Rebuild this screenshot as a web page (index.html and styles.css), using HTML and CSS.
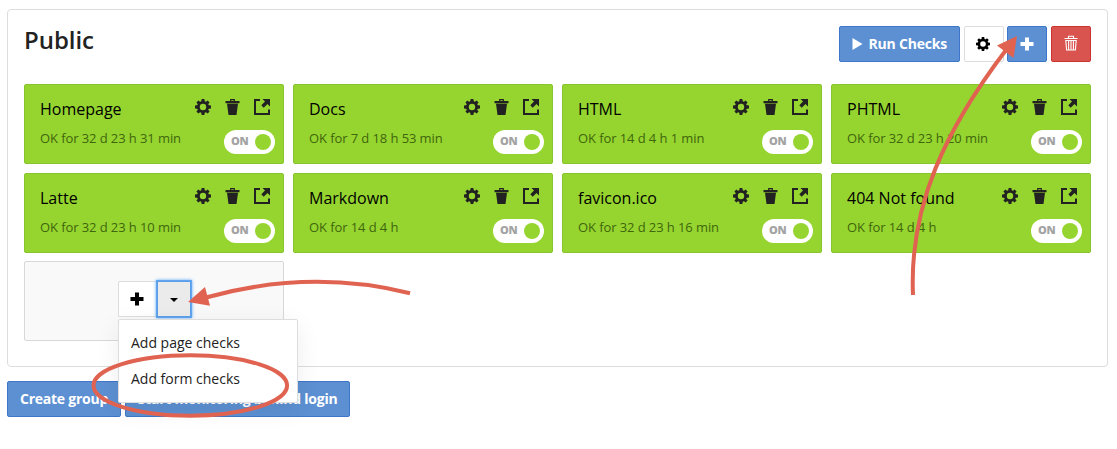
FILE: index.html
```html
<!DOCTYPE html>
<html lang="en">
<head>
<meta charset="utf-8">
<title>Public checks</title>
<link rel="stylesheet" href="styles.css">
</head>
<body>
<svg class="defs" aria-hidden="true">
  <symbol id="gear" viewBox="0 0 16 16">
    <circle cx="8" cy="8" r="4.600" fill="none" stroke="currentColor" stroke-width="2.800"/>
    <path d="M6.6 0h2.8l.5 3.5H6.1zM6.6 16h2.8l.5-3.5H6.1zM0 6.6v2.8l3.5.5V6.1zM16 6.6v2.8l-3.5.5V6.1zM1.4 3.4l2-2L6 3.5 3.5 6zM14.6 3.4l-2-2L10 3.5 12.5 6zM1.4 12.6l2 2L6 12.5 3.5 10zM14.6 12.6l-2 2L10 12.5l2.500-2.500z" fill="currentColor"/>
  </symbol>
  <symbol id="trash" viewBox="0 0 15 16">
    <path d="M.5 2h14v2.200H.5zM2 4.800h11L11.500 16h-8z" fill="currentColor"/>
    <path d="M5.700 2.500V.6h3.600v1.900" fill="none" stroke="currentColor" stroke-width="1.200"/>
  </symbol>
  <symbol id="external" viewBox="0 0 16 16">
    <path d="M6 1H1v14h14v-4.500" fill="none" stroke="currentColor" stroke-width="2"/>
    <path d="M8.500 0H16v7.500l-2.500-2.400-3.800 3.600-2.400-2.400 3.700-3.800z" fill="currentColor"/>
  </symbol>
  <symbol id="plus" viewBox="0 0 14 14">
    <path d="M5 .5h4V5h4.500v4H9v4.500H5V9H.5V5H5z" fill="currentColor"/>
  </symbol>
  <symbol id="bin" viewBox="0 0 14 16">
    <path d="M4.500 3V1.200h5V3M.5 3.500h13M1.800 5.500h10.400l-.8 9.500H2.600zM4.600 6v8.500M7 6v8.500M9.400 6v8.500" fill="none" stroke="currentColor" stroke-width="1.100"/>
  </symbol>
</svg>

<section class="panel">
  <header class="panel-head">
    <h1 class="title">Public</h1>
    <div class="actions">
      <button class="btn primary run"><svg class="play" viewBox="0 0 10 12"><path d="M0 0l10 6-10 6z" fill="currentColor"/></svg>Run Checks</button>
      <button class="btn square"><svg class="i14"><use href="#gear"/></svg></button>
      <button class="btn primary square"><svg class="i14"><use href="#plus"/></svg></button>
      <button class="btn danger square"><svg class="bin"><use href="#bin"/></svg></button>
    </div>
  </header>
  <div class="grid">
    <article class="card"><div class="info"><h2>Homepage</h2><p>OK for 32 d 23 h 31 min</p></div><div class="tools"><div class="icons"><svg class="i16"><use href="#gear"/></svg><svg class="trash"><use href="#trash"/></svg><svg class="i16"><use href="#external"/></svg></div><span class="toggle">ON<i class="knob"></i></span></div></article>
    <article class="card"><div class="info"><h2>Docs</h2><p>OK for 7 d 18 h 53 min</p></div><div class="tools"><div class="icons"><svg class="i16"><use href="#gear"/></svg><svg class="trash"><use href="#trash"/></svg><svg class="i16"><use href="#external"/></svg></div><span class="toggle">ON<i class="knob"></i></span></div></article>
    <article class="card"><div class="info"><h2>HTML</h2><p>OK for 14 d 4 h 1 min</p></div><div class="tools"><div class="icons"><svg class="i16"><use href="#gear"/></svg><svg class="trash"><use href="#trash"/></svg><svg class="i16"><use href="#external"/></svg></div><span class="toggle">ON<i class="knob"></i></span></div></article>
    <article class="card"><div class="info"><h2>PHTML</h2><p>OK for 32 d 23 h 20 min</p></div><div class="tools"><div class="icons"><svg class="i16"><use href="#gear"/></svg><svg class="trash"><use href="#trash"/></svg><svg class="i16"><use href="#external"/></svg></div><span class="toggle">ON<i class="knob"></i></span></div></article>
    <article class="card"><div class="info"><h2>Latte</h2><p>OK for 32 d 23 h 10 min</p></div><div class="tools"><div class="icons"><svg class="i16"><use href="#gear"/></svg><svg class="trash"><use href="#trash"/></svg><svg class="i16"><use href="#external"/></svg></div><span class="toggle">ON<i class="knob"></i></span></div></article>
    <article class="card"><div class="info"><h2>Markdown</h2><p>OK for 14 d 4 h</p></div><div class="tools"><div class="icons"><svg class="i16"><use href="#gear"/></svg><svg class="trash"><use href="#trash"/></svg><svg class="i16"><use href="#external"/></svg></div><span class="toggle">ON<i class="knob"></i></span></div></article>
    <article class="card"><div class="info"><h2>favicon.ico</h2><p>OK for 32 d 23 h 16 min</p></div><div class="tools"><div class="icons"><svg class="i16"><use href="#gear"/></svg><svg class="trash"><use href="#trash"/></svg><svg class="i16"><use href="#external"/></svg></div><span class="toggle">ON<i class="knob"></i></span></div></article>
    <article class="card"><div class="info"><h2>404 Not found</h2><p>OK for 14 d 4 h</p></div><div class="tools"><div class="icons"><svg class="i16"><use href="#gear"/></svg><svg class="trash"><use href="#trash"/></svg><svg class="i16"><use href="#external"/></svg></div><span class="toggle">ON<i class="knob"></i></span></div></article>
    <div class="card empty">
      <div class="split">
        <button class="btn add"><svg class="i14"><use href="#plus"/></svg></button>
        <button class="btn caret"><svg class="chev" viewBox="0 0 8 4"><path d="M0 0h8L4 4z" fill="currentColor"/></svg></button>
        <div class="menu">
          <a class="item">Add page checks</a>
          <a class="item">Add form checks</a>
        </div>
      </div>
    </div>
  </div>
</section>
<footer class="foot">
  <button class="btn primary create">Create group</button>
  <button class="btn primary monitor">Start monitoring behind login</button>
</footer>

<svg class="notes" viewBox="0 0 1117 449">
  <g fill="none" stroke="#e06352" stroke-width="4">
    <path d="M410 293.300Q310 268.500 206 297.500"/>
    <path d="M913 295C909 205 946 129 1006 50"/>
    <ellipse cx="190.300" cy="385.500" rx="96.800" ry="30.200"/>
  </g>
  <path d="M188 302L205 287l5 18.700zM1017 36l-20 9.500L1013.500 58z" fill="#e06352"/>
</svg>
</body>
</html>
```
FILE: styles.css
```css
* { box-sizing: border-box; }
body {
  margin: 0;
  padding: 9px 9px 0 7px;
  height: 449px;
  overflow: hidden;
  position: relative;
  background: #fff;
  color: #222;
  font-family: "Open Sans", sans-serif;
  font-size: 14px;
}
.defs { position: absolute; width: 0; height: 0; }
svg { display: block; flex: none; }
.panel {
  height: 358px;
  padding: 16px;
  border: 1px solid #ddd;
  border-radius: 4px;
}
.panel-head { display: flex; justify-content: space-between; height: 58px; }
.title { margin: -3px 0 0; font-size: 24px; line-height: 33px; font-weight: 600; letter-spacing: -0.05px; }
.actions { display: flex; gap: 3.600px; }
.btn {
  display: flex;
  align-items: center;
  justify-content: center;
  height: 36px;
  padding: 0 12px 2px;
  border: 1px solid #ddd;
  border-radius: 2px;
  background: #fff;
  color: #000;
  font: 700 14px "Open Sans", sans-serif;
  letter-spacing: -0.25px;
  white-space: nowrap;
}
.primary { background: #5c90d2; border-color: #3e77c9; color: #fff; }
.danger { background: #d9534f; border-color: #cb3430; color: #fff; }
.square { width: 40px; padding: 0 1px 1px 0; }
.danger.square { padding: 0 0 2px; }
.run { width: 121px; letter-spacing: -0.2px; }
.create { width: 114px; }
.monitor { width: 225px; }
.play { width: 11px; height: 12px; margin: 1px 5px 0 0; }
.i14 { width: 14px; height: 14px; }
.i16 { width: 16px; height: 16px; }
.trash { width: 15px; height: 16px; }
.bin { width: 14px; height: 16px; }
.grid {
  display: grid;
  grid-template-columns: repeat(4, 260px);
  grid-auto-rows: 80px;
  gap: 8.600px 9px;
}
.card {
  display: flex;
  justify-content: space-between;
  padding: 14px 8px 0 15px;
  border: 1px solid #88c42e;
  border-radius: 2px;
  background: #96d530;
}
.card h2 { margin: -1px 0 0; font-size: 16px; line-height: 22px; font-weight: 400; color: #000; }
.card p { margin: 9px 0 0; font-size: 13px; line-height: 18px; letter-spacing: -0.09px; color: #3f660c; white-space: nowrap; }
.tools { display: flex; flex-direction: column; align-items: flex-end; gap: 15px; }
.icons { display: flex; gap: 14px; padding-right: 5px; }
.toggle {
  display: flex;
  align-items: center;
  justify-content: space-between;
  width: 51px;
  height: 24px;
  padding: 0 4px 0 7px;
  border-radius: 12px;
  background: #fff;
  color: #a3a3a3;
  font-size: 11px;
  line-height: 22px;
  align-items: flex-start;
  font-weight: 800;
  letter-spacing: -0.3px;
}
.knob { width: 16px; height: 16px; margin-top: 4px; border-radius: 50%; background: #96d530; }
.empty { background: #f9f9f9; border-color: #d8d8d8; padding: 19px 0 0 93px; justify-content: flex-start; }
.split { position: relative; display: flex; height: 36px; }
.add { width: 39px; padding: 0 2px 0 0; border-right: 0; border-radius: 2px 0 0 2px; }
.caret {
  width: 34px;
  padding: 0;
  border: 1px solid #5b9fea;
  border-radius: 0;
  background: #ebebeb;
  box-shadow: 0 0 0 1px #62a5ee, 0 0 3px 1px #5ea9f7;
}
.chev { width: 8px; height: 4px; margin-top: 2px; }
.menu {
  position: absolute;
  z-index: 1;
  left: 0;
  top: 38px;
  width: 180px;
  height: 84px;
  padding: 5px 0;
  border: 1px solid #ddd;
  border-radius: 2px;
  background: #fff;
  box-shadow: 0 6px 25px rgba(0, 0, 0, 0.07);
}
.item { display: block; padding: 0 12px; line-height: 36px; color: #222; }
.foot { display: flex; gap: 4px; margin-top: 14px; }
.notes { position: absolute; z-index: 2; left: 0; top: 0; width: 1117px; height: 449px; pointer-events: none; }
```
